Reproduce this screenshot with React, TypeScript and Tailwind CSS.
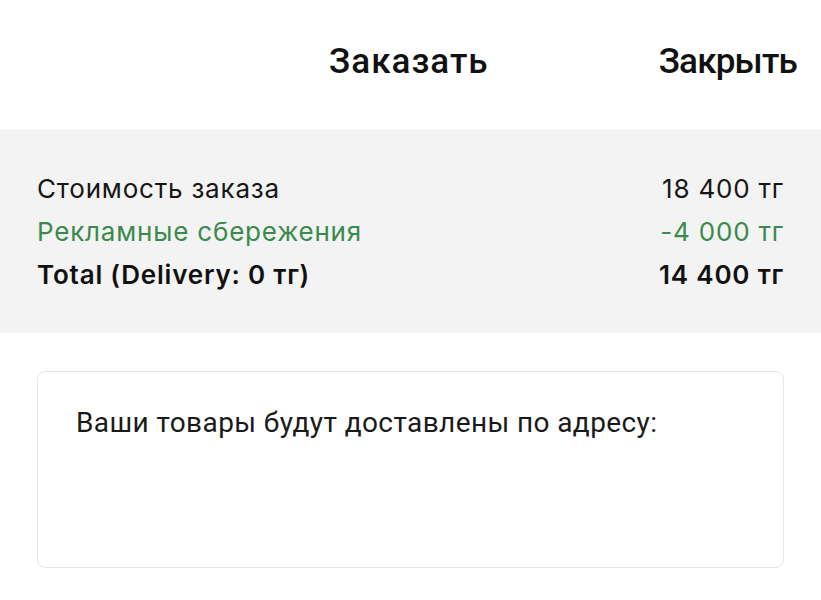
export default function App() {
  return (
    <div className="w-[821px] h-[600px] bg-white overflow-hidden font-['Roboto',sans-serif]">
      {/* Шапка */}
      <div className="h-[131px] flex items-start justify-end pt-[40px] pr-[24px] gap-[170px] border-b border-[#ececec] font-['Roboto',sans-serif]">
        <button className="font-['Roboto',sans-serif] text-[35px] font-medium text-[#111] leading-[44px] tracking-[1px]">Заказать</button>
        <button className="font-['Roboto',sans-serif] text-[35px] font-medium text-[#111] leading-[44px] tracking-[-0.8px]">Закрыть</button>
      </div>

      {/* Итоги */}
      <div className="bg-[#f3f3f3] h-[202px] px-[37px] pt-[36px] font-['Inter',sans-serif] text-[26px] leading-[43px] tracking-[0.8px]">
        <div className="flex justify-between text-[#161616]">
          <span>Стоимость заказа</span>
          <span>18 400 тг</span>
        </div>
        <div className="flex justify-between text-[#3a8a4c]">
          <span>Рекламные сбережения</span>
          <span>-4 000 тг</span>
        </div>
        <div className="flex justify-between font-semibold text-[#111]">
          <span>Total (Delivery: 0 тг)</span>
          <span>14 400 тг</span>
        </div>
      </div>

      {/* Адрес */}
      <div className="px-[37px] pt-[38px]">
        <div className="h-[197px] border border-[#e6e6e6] rounded-[8px] px-[38px] pt-[33px]">
          <p className="text-[28px] text-[#1a1a1a] leading-[36px] tracking-[0.4px]">
            Ваши товары будут доставлены по адресу:
          </p>
        </div>
      </div>
    </div>
  );
}
